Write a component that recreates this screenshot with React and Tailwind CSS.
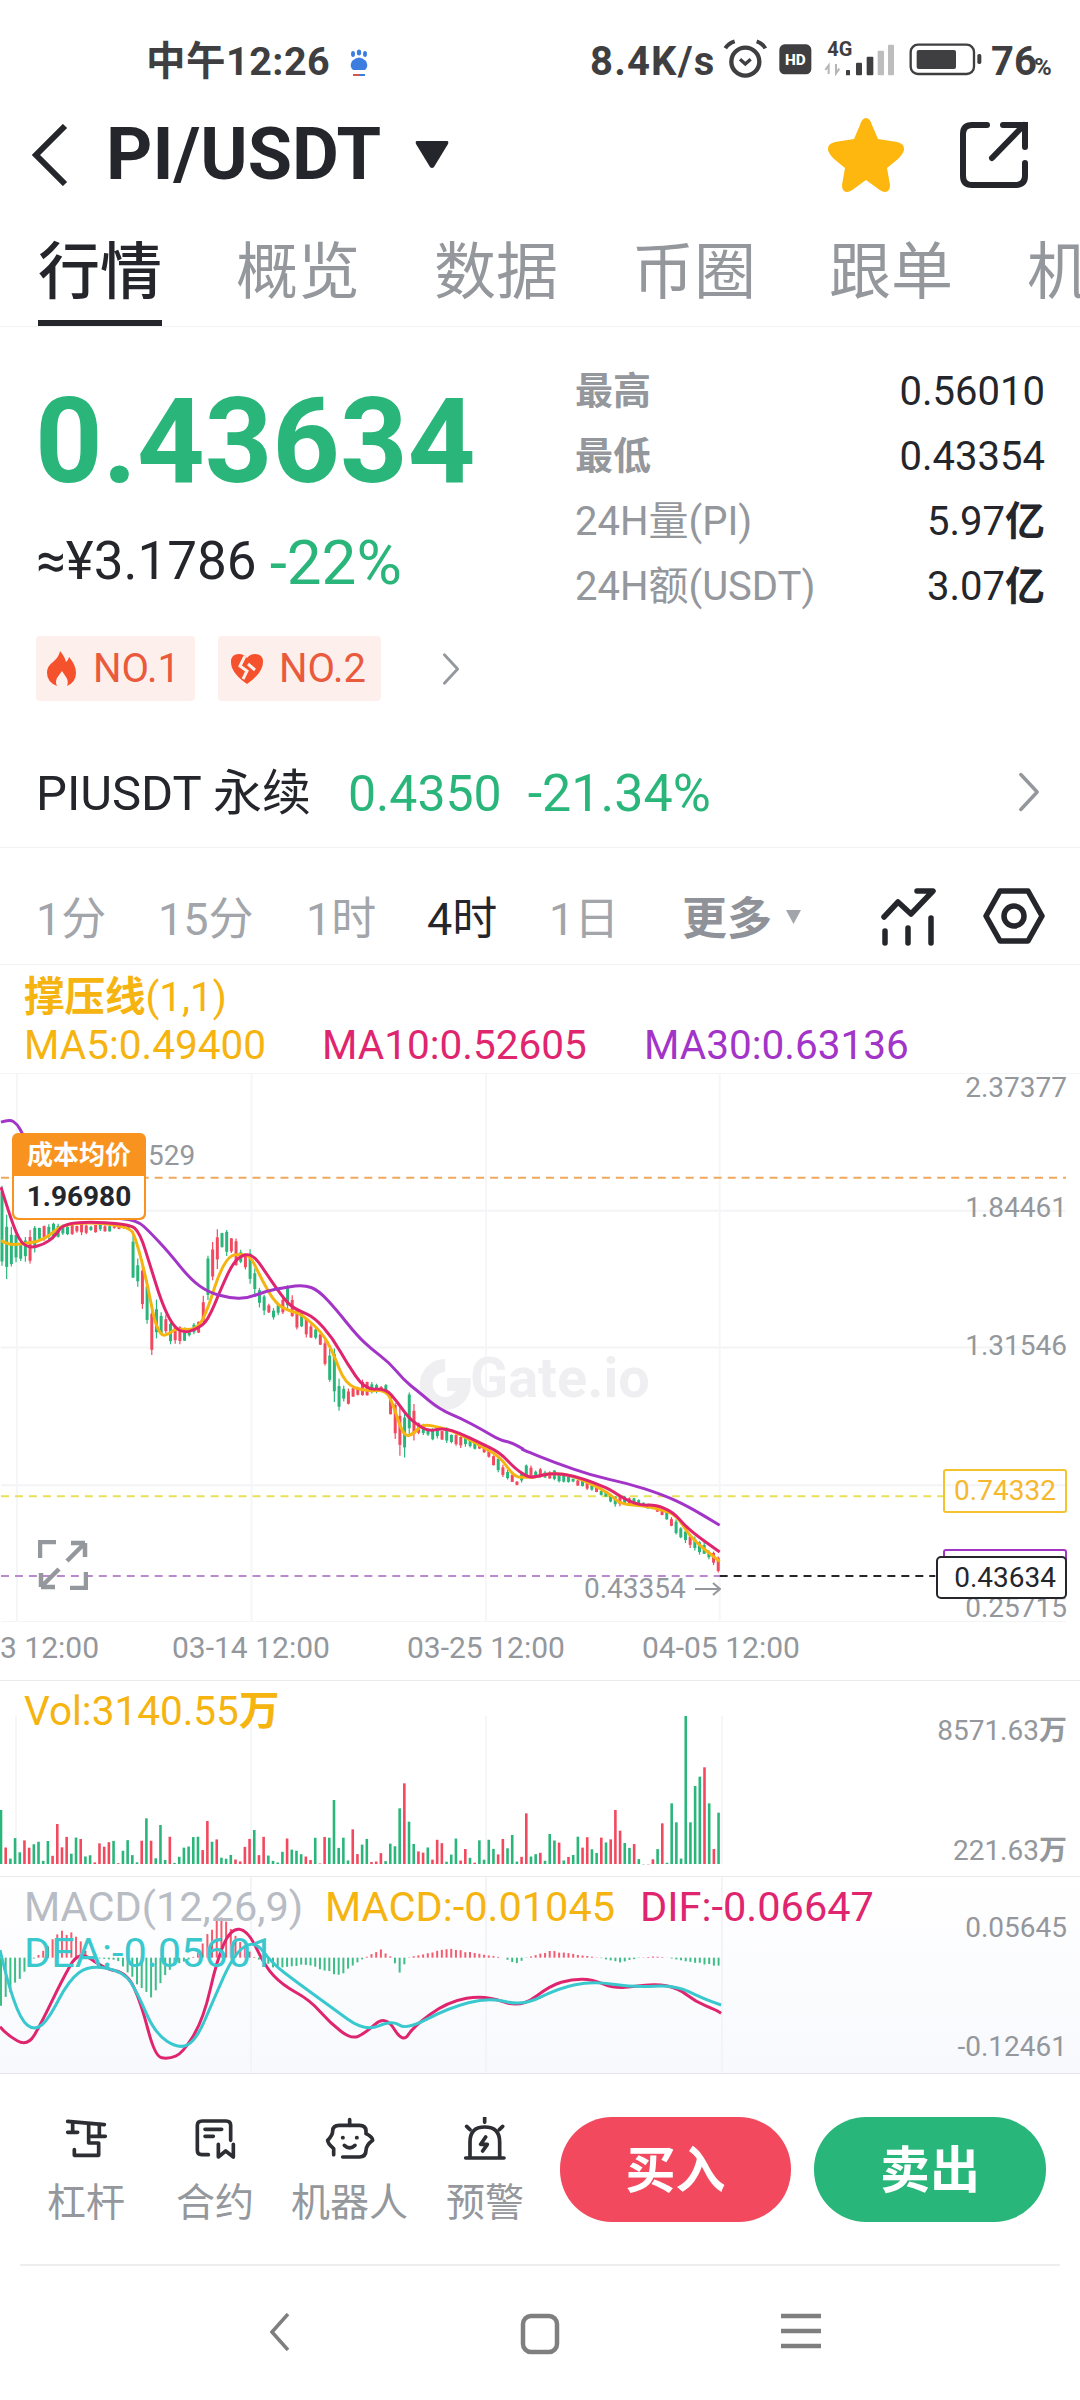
import React from "react";

const GREEN = "#2ab67a";
const RED = "#f2495f";

// helpers for the chart drawings: points were read off the picture
const toPath = (pts) => {
  let d = `M${pts[0][0].toFixed(1)} ${pts[0][1].toFixed(1)}`;
  for (let i = 1; i < pts.length - 1; i++) {
    const mx = (pts[i][0] + pts[i + 1][0]) / 2;
    const my = (pts[i][1] + pts[i + 1][1]) / 2;
    d += ` Q${pts[i][0].toFixed(1)} ${pts[i][1].toFixed(1)} ${mx.toFixed(1)} ${my.toFixed(1)}`;
  }
  const last = pts[pts.length - 1];
  return `${d} L${last[0].toFixed(1)} ${last[1].toFixed(1)}`;
};
const interp = (pts, x) => {
  if (x <= pts[0][0]) return pts[0][1];
  for (let i = 1; i < pts.length; i++) {
    if (x <= pts[i][0]) {
      const [x0, y0] = pts[i - 1];
      const [x1, y1] = pts[i];
      return y0 + ((y1 - y0) * (x - x0)) / (x1 - x0);
    }
  }
  return pts[pts.length - 1][1];
};
let seed = 7;
const rnd = () => {
  seed = (seed * 16807) % 2147483647;
  return seed / 2147483647;
};

// main chart: coords relative to chart top (y 1073)
const a = (list) => list.map(([x, y]) => [x / 2.8, y / 2.613 + 1060 - 1073]);
const b = (list) => list.map(([x, y]) => [x / 2.8 + 520, y / 2.613 + 1060 - 1073]);

const ma30 = [
  ...a([[0,160],[25,152],[45,165],[60,190],[100,260],[200,380],[300,410],[380,415],[420,450],[470,500],[530,570],[580,605],[640,620],[690,622],[740,603],[800,592],[850,586],[890,600],[940,650],[1000,720],[1040,755],[1090,790],[1130,835],[1170,865],[1230,912],[1290,935],[1350,965],[1400,993],[1430,998],[1470,1018]]),
  ...b([[0,1015],[100,1052],[200,1085],[300,1105],[400,1135],[470,1165],[560,1215]]),
];
const ma10 = [
  ...a([[0,330],[20,390],[50,470],[80,490],[120,480],[150,460],[180,420],[360,425],[390,450],[420,540],[450,630],[480,690],[510,712],[550,702],[580,680],[620,590],[650,530],[680,505],[710,510],[740,550],[780,605],[810,640],[840,655],[880,672],[930,725],[970,790],[1020,860],[1080,858],[1110,890],[1140,930],[1165,950],[1200,970],[1240,960],[1290,975],[1340,998],[1400,1025],[1440,1065],[1475,1088]]),
  ...b([[40,1090],[90,1078],[150,1085],[210,1105],[250,1120],[300,1150],[340,1163],[380,1162],[430,1180],[470,1225],[560,1285]]),
];
const ma5 = [
  ...a([[0,470],[20,480],[50,480],[120,470],[180,420],[360,430],[380,470],[410,580],[430,680],[450,720],[470,715],[490,700],[550,705],[580,650],[610,560],[640,510],[670,505],[700,510],[730,570],[770,635],[810,655],[840,660],[900,710],[930,760],[965,845],[1020,865],[1080,860],[1100,900],[1130,985],[1160,975],[1180,950],[1240,960],[1290,978],[1340,1005],[1400,1035],[1440,1090],[1475,1090]]),
  ...b([[40,1090],[90,1078],[150,1085],[250,1130],[280,1160],[340,1163],[400,1175],[440,1190],[480,1250],[560,1310]]),
];
const highEnv = [
  ...a([[0,320],[50,440],[100,420],[240,420],[360,425],[380,450],[420,580],[470,660],[510,695],[560,680],[585,460],[620,425],[660,465],[700,475],[740,610],[770,640],[800,575],[830,625],[880,680],[930,730],[960,840],[1040,830],[1080,845],[1120,900],[1140,855],[1180,945],[1240,955],[1290,970],[1400,1030],[1445,1095],[1478,1035]]),
  ...b([[40,1065],[80,1060],[150,1085],[250,1125],[300,1135],[400,1170],[440,1190],[550,1290]]),
];
const lowEnv = [
  ...a([[0,620],[40,555],[80,545],[110,480],[240,455],[360,440],[370,600],[400,700],[428,810],[450,720],[490,760],[540,725],[570,700],[620,500],[680,555],[720,655],[760,680],[800,665],[840,715],[900,760],[935,930],[960,910],[1020,880],[1080,870],[1105,1000],[1130,1060],[1160,995],[1190,990],[1270,1015],[1350,1020],[1410,1100],[1450,1120],[1500,1095]]),
  ...b([[150,1110],[250,1150],[270,1180],[300,1165],[350,1168],[400,1190],[460,1280],[520,1297],[550,1340]]),
];

const STEP = 4.69;
const candles = [];
for (let i = 0; i * STEP < 720; i++) {
  const x = i * STEP + 1;
  const hi = interp(highEnv, x);
  const lo = interp(lowEnv, x);
  const span = lo - hi;
  const top = hi + span * rnd() * 0.35;
  const bottom = lo - span * rnd() * 0.3;
  const bodyTop = top + (bottom - top) * rnd() * 0.25;
  const bodyBottom = bottom - (bottom - top) * rnd() * 0.25;
  const up = rnd() < (span > 60 ? 0.3 : 0.42);
  candles.push({ x, top, bottom, bodyTop, bodyBottom, color: up ? RED : GREEN });
}

// volume panel: zoom x / 1.452, zoom y / 3 + 1660, relative to panel top (y 1681)
const volPeaks = { 0:450, 85:492, 210:475, 230:495, 303:483, 372:510, 486:420, 511:508, 578:445, 590:370, 596:485, 745:525, 767:460, 797:522, 896:450, 900:512, 964:490, 973:430, 985:487, 994:168, 1000:487, 1010:378, 1018:350, 1025:322, 1030:430, 1041:257, 1046:458 };
const redPeaks = [85, 303, 511, 590, 767, 896, 900, 964, 1025];
const volBars = [];
for (let i = 0; i * STEP < 722; i++) {
  const x = i * STEP + 1;
  let zy = 530 + rnd() * 82;
  if (x > 640) zy = 565 + rnd() * 45;
  let color = rnd() < 0.42 ? RED : GREEN;
  for (const k in volPeaks) {
    if (Math.abs(k / 1.452 - x) < 2.4) {
      zy = volPeaks[k];
      color = redPeaks.includes(Number(k)) ? RED : GREEN;
    }
  }
  if (x > 642 && x < 650) zy = 613;
  volBars.push({ x, y: zy / 3 + 1660 - 1681, color });
}

// MACD panel: relative to panel top (y 1877)
const m = (list) => list.map(([x, y]) => [x / 1.452, y / 3 + 1660 - 1877]);
const dif = m([[0,1100],[10,1125],[40,1160],[60,1090],[90,960],[115,870],[150,925],[185,940],[205,1030],[225,1190],[245,1197],[265,1180],[295,1080],[315,900],[335,805],[360,810],[385,920],[410,975],[450,1020],[480,1090],[510,1138],[530,1120],[560,1065],[585,1150],[600,1100],[650,1025],[705,1005],[755,1045],[800,975],[830,958],[860,958],[895,988],[950,970],[985,985],[1010,1025],[1040,1050],[1047,1060]]);
const dea = m([[0,870],[10,960],[30,1080],[50,1112],[70,1080],[100,960],[130,915],[180,935],[200,1000],[225,1120],[260,1168],[285,1140],[310,1020],[340,880],[370,840],[395,910],[430,965],[480,1040],[530,1115],[570,1080],[590,1110],[650,1045],[710,1012],[760,1038],[810,985],[860,963],[920,982],[980,975],[1020,1015],[1047,1035]]);
const histEnv = m([[0,1060],[30,950],[50,893],[60,880],[85,815],[110,820],[130,893],[170,900],[220,1020],[250,920],[280,893],[320,760],[345,830],[370,893],[400,925],[450,915],[490,950],[530,893],[552,868],[570,893],[580,940],[592,893],[650,865],[730,893],[750,912],[765,893],[800,872],[870,893],[900,908],[930,893],[950,889],[970,893],[985,900],[1030,915],[1048,920]]);
const zeroY = 893 / 3 + 1660 - 1877;
const histBars = [];
for (let i = 0; i * STEP < 722; i++) {
  const x = i * STEP + 1;
  const y = interp(histEnv, x);
  histBars.push({ x, y: zeroY + (y - zeroY) * (0.85 + rnd() * 0.2), color: y < zeroY ? RED : GREEN });
}

const Chevron = ({ className }) => (
  <svg className={className} viewBox="0 0 20 36" fill="none" stroke="currentColor" strokeWidth="3" strokeLinecap="round" strokeLinejoin="round">
    <path d="M3 3L17 18L3 33" />
  </svg>
);

function StatusBar() {
  return (
    <div className="flex h-[120px] items-start pt-[40px] text-[#3f3f42]">
      <span className="ml-[146px] text-[39.5px] font-bold leading-[44px] tracking-[0.5px]">中午12:26</span>
      <svg className="ml-[18px] mt-[9px] w-[22px] h-[28px]" viewBox="0 0 22 28">
        <g fill="#3d7de0">
          <ellipse cx="5" cy="5" rx="2" ry="3" />
          <ellipse cx="11" cy="3.5" rx="2.2" ry="3" />
          <ellipse cx="17" cy="5" rx="2" ry="3" />
          <path d="M4 12Q11 5 18 12Q21 18 17 21H5Q1 18 4 12Z" />
        </g>
        <rect x="5" y="25" width="6" height="2" fill="#d9534f" />
        <rect x="11" y="25" width="6" height="2" fill="#3d7de0" />
      </svg>
      <span className="absolute left-[590px] text-[40px] font-bold leading-[44px] tracking-[1.2px]">8.4K/s</span>
      <svg className="absolute left-[719px] top-[31px] w-[270px] h-[50px]" viewBox="27 3 810 150" fill="none">
        {/* alarm */}
        <circle cx="106" cy="95" r="42" stroke="#3f3f42" strokeWidth="13" />
        <path d="M90 88L106 102L122 88" stroke="#3f3f42" strokeWidth="10" />
        <path d="M46 55Q55 40 74 34M140 34Q158 40 166 55" stroke="#3f3f42" strokeWidth="12" />
        {/* HD */}
        <rect x="208" y="43" width="96" height="90" rx="16" fill="#3f3f42" />
        <text x="256" y="104" textAnchor="middle" fill="#fff" fontSize="46" fontWeight="800">HD</text>
        {/* signal */}
        <text x="352" y="78" fill="#3f3f42" fontSize="60" fontWeight="700">4G</text>
        <path d="M356 132V106L346 120M378 102V130L388 116" stroke="#b5b5b5" strokeWidth="6" />
        <rect x="408" y="120" width="12" height="16" rx="2" fill="#3f3f42" />
        <rect x="438" y="98" width="18" height="38" rx="3" fill="#3f3f42" />
        <rect x="470" y="80" width="20" height="56" rx="3" fill="#3f3f42" />
        <rect x="503" y="62" width="19" height="74" rx="3" fill="#bdbdbd" />
        <rect x="534" y="44" width="18" height="92" rx="3" fill="#bdbdbd" />
        {/* battery */}
        <rect x="602" y="44" width="190" height="88" rx="22" stroke="#3f3f42" strokeWidth="7" />
        <rect x="620" y="60" width="118" height="57" rx="6" fill="#3f3f42" />
        <rect x="802" y="72" width="12" height="30" rx="5" fill="#3f3f42" />
      </svg>
      <span className="absolute left-[991px] text-[40px] font-bold leading-[44px]">76</span>
      <span className="absolute left-[1034px] top-[53px] text-[24px] font-bold leading-[28px]">%</span>
    </div>
  );
}

function Header() {
  return (
    <div className="flex h-[70px] items-center text-[#24262b]">
      <svg className="ml-[32px] w-[36px] h-[62px]" viewBox="0 0 36 62" fill="none" stroke="currentColor" strokeWidth="6">
        <path d="M33 2L4 31L33 60" />
      </svg>
      <span className="ml-[38px] text-[72px] font-bold leading-[70px]">PI/USDT</span>
      <svg className="ml-[34px] w-[34px] h-[28px]" viewBox="0 0 34 28" fill="currentColor">
        <path d="M2 0H32Q34 0 33 3L19 26Q17 28 15 26L1 3Q0 0 2 0Z" />
      </svg>
      <svg className="ml-auto w-[78px] h-[76px]" viewBox="0 0 78 76" fill="#fdb70f">
        <path d="M39 1Q43 1 45 8L51 22L70 25Q78 27 77 33Q76 37 71 42L60 51L63 68Q63 75 58 75Q55 75 50 71L39 63L28 71Q23 75 20 75Q15 75 15 68L18 51L7 42Q2 37 1 33Q0 27 8 25L27 22L33 8Q35 1 39 1Z" />
      </svg>
      <svg className="ml-[55px] mr-[52px] w-[68px] h-[68px]" viewBox="0 0 68 68" fill="none" stroke="currentColor" strokeWidth="6" strokeLinecap="round">
        <path d="M27 4H12Q3 4 3 13V55Q3 64 12 64H55Q65 64 65 55V42" />
        <path d="M32 37L64 4M43 4H65V26" />
      </svg>
    </div>
  );
}

function Tabs() {
  return (
    <div className="flex h-[137px] overflow-hidden whitespace-nowrap border-b border-[#f1f2f4] pt-[53px] text-[62px] leading-[60px] text-[#94979c]">
      <div className="ml-[38px] flex w-[124px] shrink-0 flex-col">
        <span className="font-medium text-[#24262b]">行情</span>
        <div className="mt-[17px] h-[6px] bg-[#24262b]" />
      </div>
      <span className="ml-[74px] shrink-0">概览</span>
      <span className="ml-[74px] shrink-0">数据</span>
      <span className="ml-[74px] shrink-0">币圈</span>
      <span className="ml-[73px] shrink-0">跟单</span>
      <span className="ml-[74px] shrink-0">机</span>
    </div>
  );
}

function StatRow({ label, value, unit, strong }) {
  return (
    <div className="flex h-[65px] items-center justify-between">
      <span className={`text-[#94979c] ${strong ? "text-[38px] font-bold" : "text-[40px]"}`}>{label}</span>
      <span className="text-[40px] text-[#24262b]">
        {value}
        {unit && <span className="font-bold">{unit}</span>}
      </span>
    </div>
  );
}

function PriceSection() {
  return (
    <div className="flex justify-between pr-[35px]">
      <div className="pl-[36px]">
        <div className="-ml-[1px] mt-[56px] text-[118px] font-bold leading-[118px] text-[#2ab67a]">0.43634</div>
        <div className="mt-[31px] flex h-[60px] items-center text-[#24262b]">
          <span className="text-[53px]">≈¥3.1786</span>
          <span className="ml-[13px] text-[62px] text-[#2ab67a]">-22%</span>
        </div>
        <div className="mt-[44px] flex h-[65px] items-center">
          <div className="flex h-full w-[159px] items-center rounded-[4px] bg-[#fdf0ec] pl-[11px] text-[40px] text-[#ea5a3d]">
            <svg className="w-[29px] h-[35px]" viewBox="0 0 29 35" fill="#f5512c">
              <path d="M13 0Q18 6 19 11Q21 10 22 6Q29 14 29 22Q29 31 20 35Q22 30 19 26Q17 23 15 20Q12 24 10 27Q8 31 10 35Q0 31 0 22Q0 15 6 11Q12 6 13 0Z" />
            </svg>
            <span className="ml-[17px]">NO.1</span>
          </div>
          <div className="ml-[23px] flex h-full w-[163px] items-center rounded-[4px] bg-[#fdf0ec] pl-[13px] text-[40px] text-[#ea5a3d]">
            <svg className="w-[32px] h-[32px]" viewBox="0 0 32 32">
              <path fill="#f5512c" d="M16 31Q0 20 0 9Q0 1 8 1Q13 1 16 5Q19 1 24 1Q32 1 32 9Q32 20 16 31Z" />
              <path fill="none" stroke="#fdf0ec" strokeWidth="3" d="M14 3L9 13L16 18L12 26M17 11L24 17" />
            </svg>
            <span className="ml-[16px]">NO.2</span>
          </div>
          <Chevron className="ml-[58px] w-[24px] h-[34px] text-[#94979c]" />
        </div>
      </div>
      <div className="mt-[32px] w-[470px]">
        <StatRow label="最高" value="0.56010" strong />
        <StatRow label="最低" value="0.43354" strong />
        <StatRow label="24H量(PI)" value="5.97" unit="亿" />
        <StatRow label="24H额(USDT)" value="3.07" unit="亿" />
      </div>
    </div>
  );
}

function PerpRow() {
  return (
    <div className="mt-[40px] flex h-[107px] items-center border-b border-[#f1f2f4] pl-[36px] pr-[38px] text-[49px]">
      <span className="w-[312px] text-[#24262b]">PIUSDT 永续</span>
      <span className="text-[50px] text-[#2ab67a]">0.4350</span>
      <span className="ml-[26px] text-[52px] text-[#2ab67a]">-21.34%</span>
      <Chevron className="-mt-[4px] ml-auto w-[26px] h-[42px] text-[#94979c]" />
    </div>
  );
}

function Timeframes() {
  return (
    <div className="flex h-[117px] items-start border-b border-[#f1f2f4] pl-[36px] pr-[35px] pt-[42px] text-[45px] leading-[60px] text-[#a2a5aa]">
      <span className="w-[122px]">1分</span>
      <span className="w-[148px]">15分</span>
      <span className="w-[121px]">1时</span>
      <span className="w-[122px] text-[#24262b]">4时</span>
      <span className="w-[133px]">1日</span>
      <span className="font-bold text-[#8f9298]">更多</span>
      <svg className="ml-[14px] mt-[20px] w-[15px] h-[14px]" viewBox="0 0 15 14" fill="#a2a5aa">
        <path d="M0 0H15L7.5 14Z" />
      </svg>
      <svg className="ml-auto -mt-[2px] w-[56px] h-[58px]" viewBox="0 0 56 58" fill="none" stroke="#24262b" strokeWidth="5.5" strokeLinecap="round" strokeLinejoin="round">
        <path d="M3 29L17 14L30 26L52 3H36" />
        <path d="M4 43V55M27 40V55M50 30V55" />
      </svg>
      <svg className="ml-[46px] -mt-[2px] w-[62px] h-[56px]" viewBox="0 0 62 56" fill="none" stroke="#24262b" strokeWidth="5.5" strokeLinejoin="round">
        <path d="M17 3H45L59 28L45 53H17L3 28Z" />
        <circle cx="31" cy="28" r="10" />
      </svg>
    </div>
  );
}

function Indicators() {
  return (
    <div className="h-[108px] pl-[24px] text-[40.5px] leading-[48px]">
      <div className="pt-[8px] text-[#f5b40f]">
        <span className="font-bold">撑压线</span>(1,1)
      </div>
      <div className="flex">
        <span className="w-[298px] text-[#f5b40f]">MA5:0.49400</span>
        <span className="w-[322px] text-[#e0256f]">MA10:0.52605</span>
        <span className="text-[#a334c8]">MA30:0.63136</span>
      </div>
    </div>
  );
}

const AxisLabel = ({ top, children }) => (
  <span className="absolute right-[13px] text-[28px] leading-[30px] text-[#94979c]" style={{ top }}>
    {children}
  </span>
);

function MainChart() {
  return (
    <div className="relative h-[608px] overflow-hidden border-b border-[#e9eaec]">
      <svg className="block w-[1080px] h-[549px] border-t border-[#f4f5f7]" viewBox="0 0 1080 549" fill="none">
        <path d="M0 137H1067M0 274H1067M0 412H1067M0 549H1067" stroke="#f3f4f6" strokeWidth="2" />
        <path d="M16 0V549M251 0V549M486 0V549M720 0V549" stroke="#f5f6f8" strokeWidth="2" />
        {/* watermark */}
        <path d="M445 292A19 19 0 1 0 464 311H447" stroke="#efeff1" strokeWidth="13" />
        <text x="470" y="324" fill="#efeff1" fontSize="56" fontWeight="700">Gate.io</text>
        <path d="M0 104H1067" stroke="#f0a95c" strokeWidth="2" strokeDasharray="8 6" />
        <path d="M0 423H945" stroke="#e8e05a" strokeWidth="2" strokeDasharray="8 6" />
        <path d="M0 503H720" stroke="#b98ad0" strokeWidth="2" strokeDasharray="8 6" />
        <path d="M720 503H936" stroke="#24262b" strokeWidth="2" strokeDasharray="8 6" />
        {candles.map((c) => (
          <g key={c.x} stroke={c.color}>
            <path d={`M${c.x} ${c.top}V${c.bottom}`} strokeWidth="1.2" />
            <path d={`M${c.x} ${c.bodyTop}V${c.bodyBottom}`} strokeWidth="3" />
          </g>
        ))}
        <path d={toPath(ma5)} stroke="#f5b40f" strokeWidth="3" />
        <path d={toPath(ma10)} stroke="#e0256f" strokeWidth="3" />
        <path d={toPath(ma30)} stroke="#a334c8" strokeWidth="3" />
      </svg>

      <AxisLabel top={0}>2.37377</AxisLabel>
      <AxisLabel top={120}>1.84461</AxisLabel>
      <AxisLabel top={258}>1.31546</AxisLabel>
      <AxisLabel top={520}>0.25715</AxisLabel>

      {/* cost price tag */}
      <span className="absolute left-[148px] top-[66px] text-[28px] leading-[34px] text-[#94979c]">529</span>
      <div className="absolute left-[12px] top-[60px] w-[134px] h-[87px] rounded-[6px] bg-[#f7931e] p-[2px] text-center">
        <div className="h-[41px] text-[26px] font-bold leading-[41px] text-white">成本均价</div>
        <div className="h-[42px] rounded-b-[5px] bg-white text-[28px] font-bold leading-[42px] text-[#24262b]">1.96980</div>
      </div>

      {/* expand */}
      <svg className="absolute left-[38px] top-[467px] w-[50px] h-[50px]" viewBox="0 0 50 50" fill="none" stroke="#94979c" strokeWidth="4.5">
        <path d="M18 2H2V18M32 48H48V32" />
        <path d="M29 21L47 3M47 3H33M47 3V17M21 29L3 47M3 47H17M3 47V33" />
      </svg>

      {/* price tags */}
      <div className="absolute left-[943px] top-[396px] flex h-[44px] w-[124px] items-center justify-center rounded-[3px] border-2 border-[#f5c230] text-[28px] text-[#f5b82e]">0.74332</div>
      <div className="absolute left-[943px] top-[476px] h-[20px] w-[124px] rounded-t-[3px] border-2 border-[#a334c8]" />
      <div className="absolute left-[936px] top-[483px] flex h-[43px] w-[131px] items-center justify-end rounded-[5px] border-2 border-[#24262b] bg-white pr-[9px] text-[28px] text-[#24262b]">0.43634</div>
      <span className="absolute left-[584px] top-[498px] text-[28px] leading-[36px] text-[#94979c]">0.43354</span>
      <svg className="absolute left-[695px] top-[509px] w-[26px] h-[14px]" viewBox="0 0 26 14" fill="none" stroke="#94979c" strokeWidth="2">
        <path d="M0 7H25M18 1L25 7L18 13" />
      </svg>

      {/* time axis */}
      <span className="absolute left-0 top-[557px] text-[30px] leading-[36px] text-[#94979c]">3 12:00</span>
      <span className="absolute left-[172px] top-[557px] text-[30px] leading-[36px] text-[#94979c]">03-14 12:00</span>
      <span className="absolute left-[407px] top-[557px] text-[30px] leading-[36px] text-[#94979c]">03-25 12:00</span>
      <span className="absolute left-[642px] top-[557px] text-[30px] leading-[36px] text-[#94979c]">04-05 12:00</span>
    </div>
  );
}

function VolumePanel() {
  return (
    <div className="relative h-[196px] border-b border-[#e9eaec]">
      <svg className="block w-[1080px] h-[195px]" viewBox="0 0 1080 195" fill="none">
        <path d="M16 35V183M251 35V183M486 35V183M722 35V183" stroke="#f5f6f8" strokeWidth="2" />
        {volBars.map((v) => (
          <path key={v.x} d={`M${v.x} 183V${v.y}`} stroke={v.color} strokeWidth="2.6" />
        ))}
      </svg>
      <div className="absolute left-[24px] top-[10px] text-[40.5px] leading-[40px] text-[#f5b40f]">
        Vol:3140.55<span className="font-bold">万</span>
      </div>
      <span className="absolute right-[13px] top-[32px] text-[28px] leading-[36px] text-[#94979c]">
        8571.63<span className="font-bold">万</span>
      </span>
      <span className="absolute right-[13px] top-[152px] text-[28px] leading-[36px] text-[#94979c]">
        221.63<span className="font-bold">万</span>
      </span>
    </div>
  );
}

function MacdPanel() {
  return (
    <div className="relative h-[197px] border-b border-[#e4e5ea] bg-gradient-to-b from-white to-[#f8f9fd]">
      <svg className="block w-[1080px] h-[196px]" viewBox="0 0 1080 196" fill="none">
        <path d="M251 0V196M486 0V196M722 0V196" stroke="#f3f4f7" strokeWidth="2" />
        {histBars.map((h) => (
          <path key={h.x} d={`M${h.x} ${zeroY}V${h.y}`} stroke={h.color} strokeWidth="2" opacity="0.9" />
        ))}
        <path d={toPath(dif)} stroke="#e0256f" strokeWidth="3" />
        <path d={toPath(dea)} stroke="#3ac8cf" strokeWidth="3" />
      </svg>
      <div className="absolute left-[24px] top-[8px] flex text-[41.5px] leading-[44px]">
        <span className="w-[301px] text-[#b8bcc4]">MACD(12,26,9)</span>
        <span className="w-[315px] text-[#f5b40f]">MACD:-0.01045</span>
        <span className="text-[#e0256f]">DIF:-0.06647</span>
      </div>
      <span className="absolute left-[24px] top-[54px] text-[41.5px] leading-[44px] text-[#3ac8cf]">DEA:-0.05601</span>
      <span className="absolute right-[13px] top-[33px] text-[28px] leading-[36px] text-[#94979c]">0.05645</span>
      <span className="absolute right-[13px] top-[152px] text-[28px] leading-[36px] text-[#94979c]">-0.12461</span>
    </div>
  );
}

function ToolIcon({ label, className, viewBox, children }) {
  return (
    <div className={`flex flex-col items-center ${className}`}>
      <svg className="h-[44px] w-[50px]" viewBox={viewBox} fill="none" stroke="#2c2e33" strokeWidth="11" strokeLinecap="round" strokeLinejoin="round">
        {children}
      </svg>
      <span className="mt-[20px] text-[39px] leading-[44px] text-[#94979c] whitespace-nowrap">{label}</span>
    </div>
  );
}

function BottomBar() {
  return (
    <div className="flex h-[190px] items-start pt-[43px]">
      <ToolIcon label="杠杆" className="ml-[47px] w-[78px]" viewBox="35 30 150 132">
        <path d="M55 43L165 53" />
        <path d="M70 48V74M55 76H85M150 52V88M125 88H168" />
        <path d="M118 52V108H148V145H75V128" />
      </ToolIcon>
      <ToolIcon label="合约" className="ml-[51px] w-[78px]" viewBox="415 30 150 132">
        <path d="M470 143H450Q437 143 437 130V55Q437 42 452 42H523Q537 42 537 55V100" />
        <path d="M460 67H510M460 88H485" />
        <path d="M500 112V150L522 132L545 150V112" />
      </ToolIcon>
      <ToolIcon label="机器人" className="ml-[37px] w-[117px]" viewBox="822 30 150 132">
        <path d="M848 143V125Q830 110 830 100Q845 85 845 72Q845 55 865 55H925Q945 55 945 72V80Q965 90 965 100Q945 115 945 130Q945 150 925 150H875" />
        <path d="M896 38V55M880 115Q896 130 912 115M875 92H876M917 92H918" />
      </ToolIcon>
      <ToolIcon label="预警" className="ml-[38px] w-[78px]" viewBox="1228 30 150 132">
        <path d="M1245 153H1360M1258 153V105Q1258 60 1302 60Q1347 60 1347 105V153" />
        <path d="M1302 32V46M1248 58L1258 68M1356 58L1346 68M1305 90L1290 112H1310L1296 132" />
      </ToolIcon>
      <button className="ml-[36px] h-[105px] w-[231px] rounded-[52px] bg-[#f2495f] pt-[4px] text-[50px] font-bold text-white">买入</button>
      <button className="ml-[23px] h-[105px] w-[232px] rounded-[52px] bg-[#29b67a] pt-[4px] text-[50px] font-bold text-white">卖出</button>
    </div>
  );
}

function NavBar() {
  return (
    <div className="mx-[20px] flex h-[136px] items-start border-t-2 border-[#eeeeef] pt-[47px]">
      <svg className="ml-[250px] w-[20px] h-[38px]" viewBox="0 0 20 38" fill="none" stroke="#7f7f7f" strokeWidth="3.5">
        <path d="M18 1L2 19L18 37" />
      </svg>
      <svg className="ml-[230px] w-[40px] h-[42px]" viewBox="0 0 40 42" fill="none" stroke="#7f7f7f" strokeWidth="4.5">
        <rect x="3" y="3" width="34" height="36" rx="8" />
      </svg>
      <svg className="ml-[221px] w-[40px] h-[36px]" viewBox="0 0 40 36" fill="none" stroke="#7f7f7f" strokeWidth="4.5">
        <path d="M0 3H40M0 18H40M0 33H40" />
      </svg>
    </div>
  );
}

export default function App() {
  return (
    <div className="relative h-[2400px] w-[1080px] overflow-hidden bg-white font-['Roboto','Noto_Sans_CJK_SC',sans-serif]">
      <StatusBar />
      <Header />
      <Tabs />
      <PriceSection />
      <PerpRow />
      <Timeframes />
      <Indicators />
      <MainChart />
      <VolumePanel />
      <MacdPanel />
      <BottomBar />
      <NavBar />
    </div>
  );
}
